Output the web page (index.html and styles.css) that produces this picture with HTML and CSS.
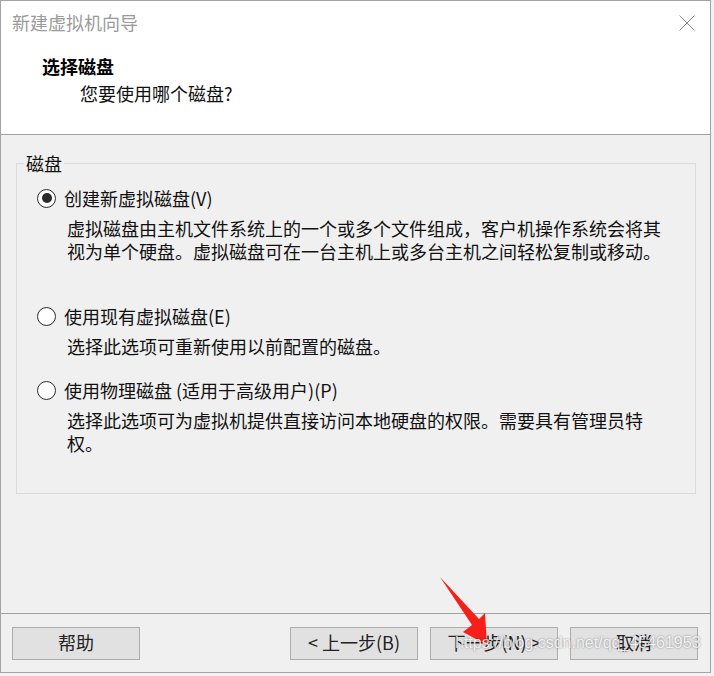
FILE: index.html
```html
<!DOCTYPE html>
<html lang="zh-CN">
<head>
<meta charset="utf-8">
<title>新建虚拟机向导</title>
<link rel="stylesheet" href="styles.css">
</head>
<body>
<div class="window">
  <div class="header">
    <div class="titlebar">
      <span class="title">新建虚拟机向导</span>
      <svg class="close" width="16" height="16" viewBox="0 0 16 16"><path d="M0.5 0.5L15.5 15.5M15.5 0.5L0.5 15.5" stroke="#8a8a8a" stroke-width="1" fill="none"/></svg>
    </div>
    <div class="heading">选择磁盘</div>
    <div class="subheading">您要使用哪个磁盘?</div>
  </div>
  <div class="content">
    <div class="group">
      <div class="legend">磁盘</div>
      <div class="option option-first">
        <div class="radio-row"><span class="radio checked"></span><span>创建新虚拟磁盘(V)</span></div>
        <p class="desc">虚拟磁盘由主机文件系统上的一个或多个文件组成，客户机操作系统会将其视为单个硬盘。虚拟磁盘可在一台主机上或多台主机之间轻松复制或移动。</p>
      </div>
      <div class="option option-second">
        <div class="radio-row"><span class="radio"></span><span>使用现有虚拟磁盘(E)</span></div>
        <p class="desc">选择此选项可重新使用以前配置的磁盘。</p>
      </div>
      <div class="option">
        <div class="radio-row"><span class="radio"></span><span>使用物理磁盘 (适用于高级用户)(P)</span></div>
        <p class="desc">选择此选项可为虚拟机提供直接访问本地硬盘的权限。需要具有管理员特权。</p>
      </div>
    </div>
  </div>
  <div class="footer">
    <button class="btn">帮助</button>
    <div class="nav">
      <button class="btn">&lt; 上一步(B)</button>
      <button class="btn">下一步(N) &gt;</button>
      <button class="btn">取消</button>
    </div>
  </div>
</div>
<svg class="arrow" width="714" height="676" viewBox="0 0 714 676"><polygon points="440,577 479,619 485,613 487,645 463,632 472,625" fill="#f5201a"/></svg>
<div class="watermark">https://blog.csdn.net/qq_45461953</div>
</body>
</html>
```

FILE: styles.css
```css
* { box-sizing: border-box; }
html, body { margin: 0; padding: 0; }
body {
  width: 714px;
  height: 676px;
  background: #f2f2f2;
  font-family: "Noto Sans CJK SC", "Noto Sans", sans-serif;
  font-size: 18px;
  color: #111;
  position: relative;
  overflow: hidden;
}
.window {
  width: 711px;
  height: 673px;
  border: 1px solid #a3a3a3;
  background: #f0f0f0;
  display: flex;
  flex-direction: column;
}
.header {
  background: #fff;
  height: 134px;
  border-bottom: 1px solid #a0a0a0;
  display: flex;
  flex-direction: column;
}
.titlebar {
  height: 42px;
  display: flex;
  align-items: center;
  justify-content: space-between;
  padding: 0 15px 0 11px;
}
.title {
  color: #9a9a9a;
  line-height: 24px;
}
.close { display: block; margin-top: 2px; }
.heading {
  font-weight: 700;
  line-height: 24px;
  margin: 11px 0 0 41px;
  color: #000;
}
.subheading {
  line-height: 24px;
  margin: 3px 0 0 79px;
  color: #111;
}
.content {
  flex: 1;
  padding: 28px 14px 0 15px;
}
.group {
  height: 331px;
  border: 1px solid #dcdcdc;
}
.legend {
  width: fit-content;
  margin: -13px 0 0 7px;
  padding: 0 2px;
  line-height: 24px;
  height: 24px;
  background: #f0f0f0;
}
.option { padding-left: 20px; }
.option-first { margin-top: 11px; margin-bottom: 41px; }
.option-second { margin-bottom: 20px; }
.radio-row {
  display: flex;
  align-items: center;
  gap: 8px;
  line-height: 24px;
  height: 24px;
}
.radio {
  width: 19px;
  height: 19px;
  border: 1.5px solid #2a2a2a;
  border-radius: 50%;
  background: #fff;
  display: flex;
  align-items: center;
  justify-content: center;
  flex: none;
}
.radio.checked::after {
  content: "";
  width: 10px;
  height: 10px;
  border-radius: 50%;
  background: #2a2a2a;
}
.desc {
  margin: 7px 0 0 30px;
  width: 600px;
  line-height: 23px;
}
.footer {
  border-top: 1px solid #a0a0a0;
  height: 59px;
  padding: 13px 12px 0 11px;
  display: flex;
  justify-content: space-between;
  align-items: flex-start;
}
.nav { display: flex; gap: 12px; }
.btn {
  width: 128px;
  height: 33px;
  border: 1px solid #adadad;
  background: #e1e1e1;
  font-family: inherit;
  font-size: 18px;
  color: #222;
  padding: 0 0 3px;
  line-height: 24px;
}
.arrow {
  position: absolute;
  left: 0;
  top: 0;
  pointer-events: none;
}
.watermark {
  position: absolute;
  left: 455px;
  top: 632px;
  font-family: "Liberation Sans", Arial, sans-serif;
  font-size: 16px;
  line-height: 22px;
  color: rgba(255, 255, 255, 0.85);
  text-shadow: 0 0 2px rgba(0, 0, 0, 0.45);
  white-space: nowrap;
  pointer-events: none;
}
```
